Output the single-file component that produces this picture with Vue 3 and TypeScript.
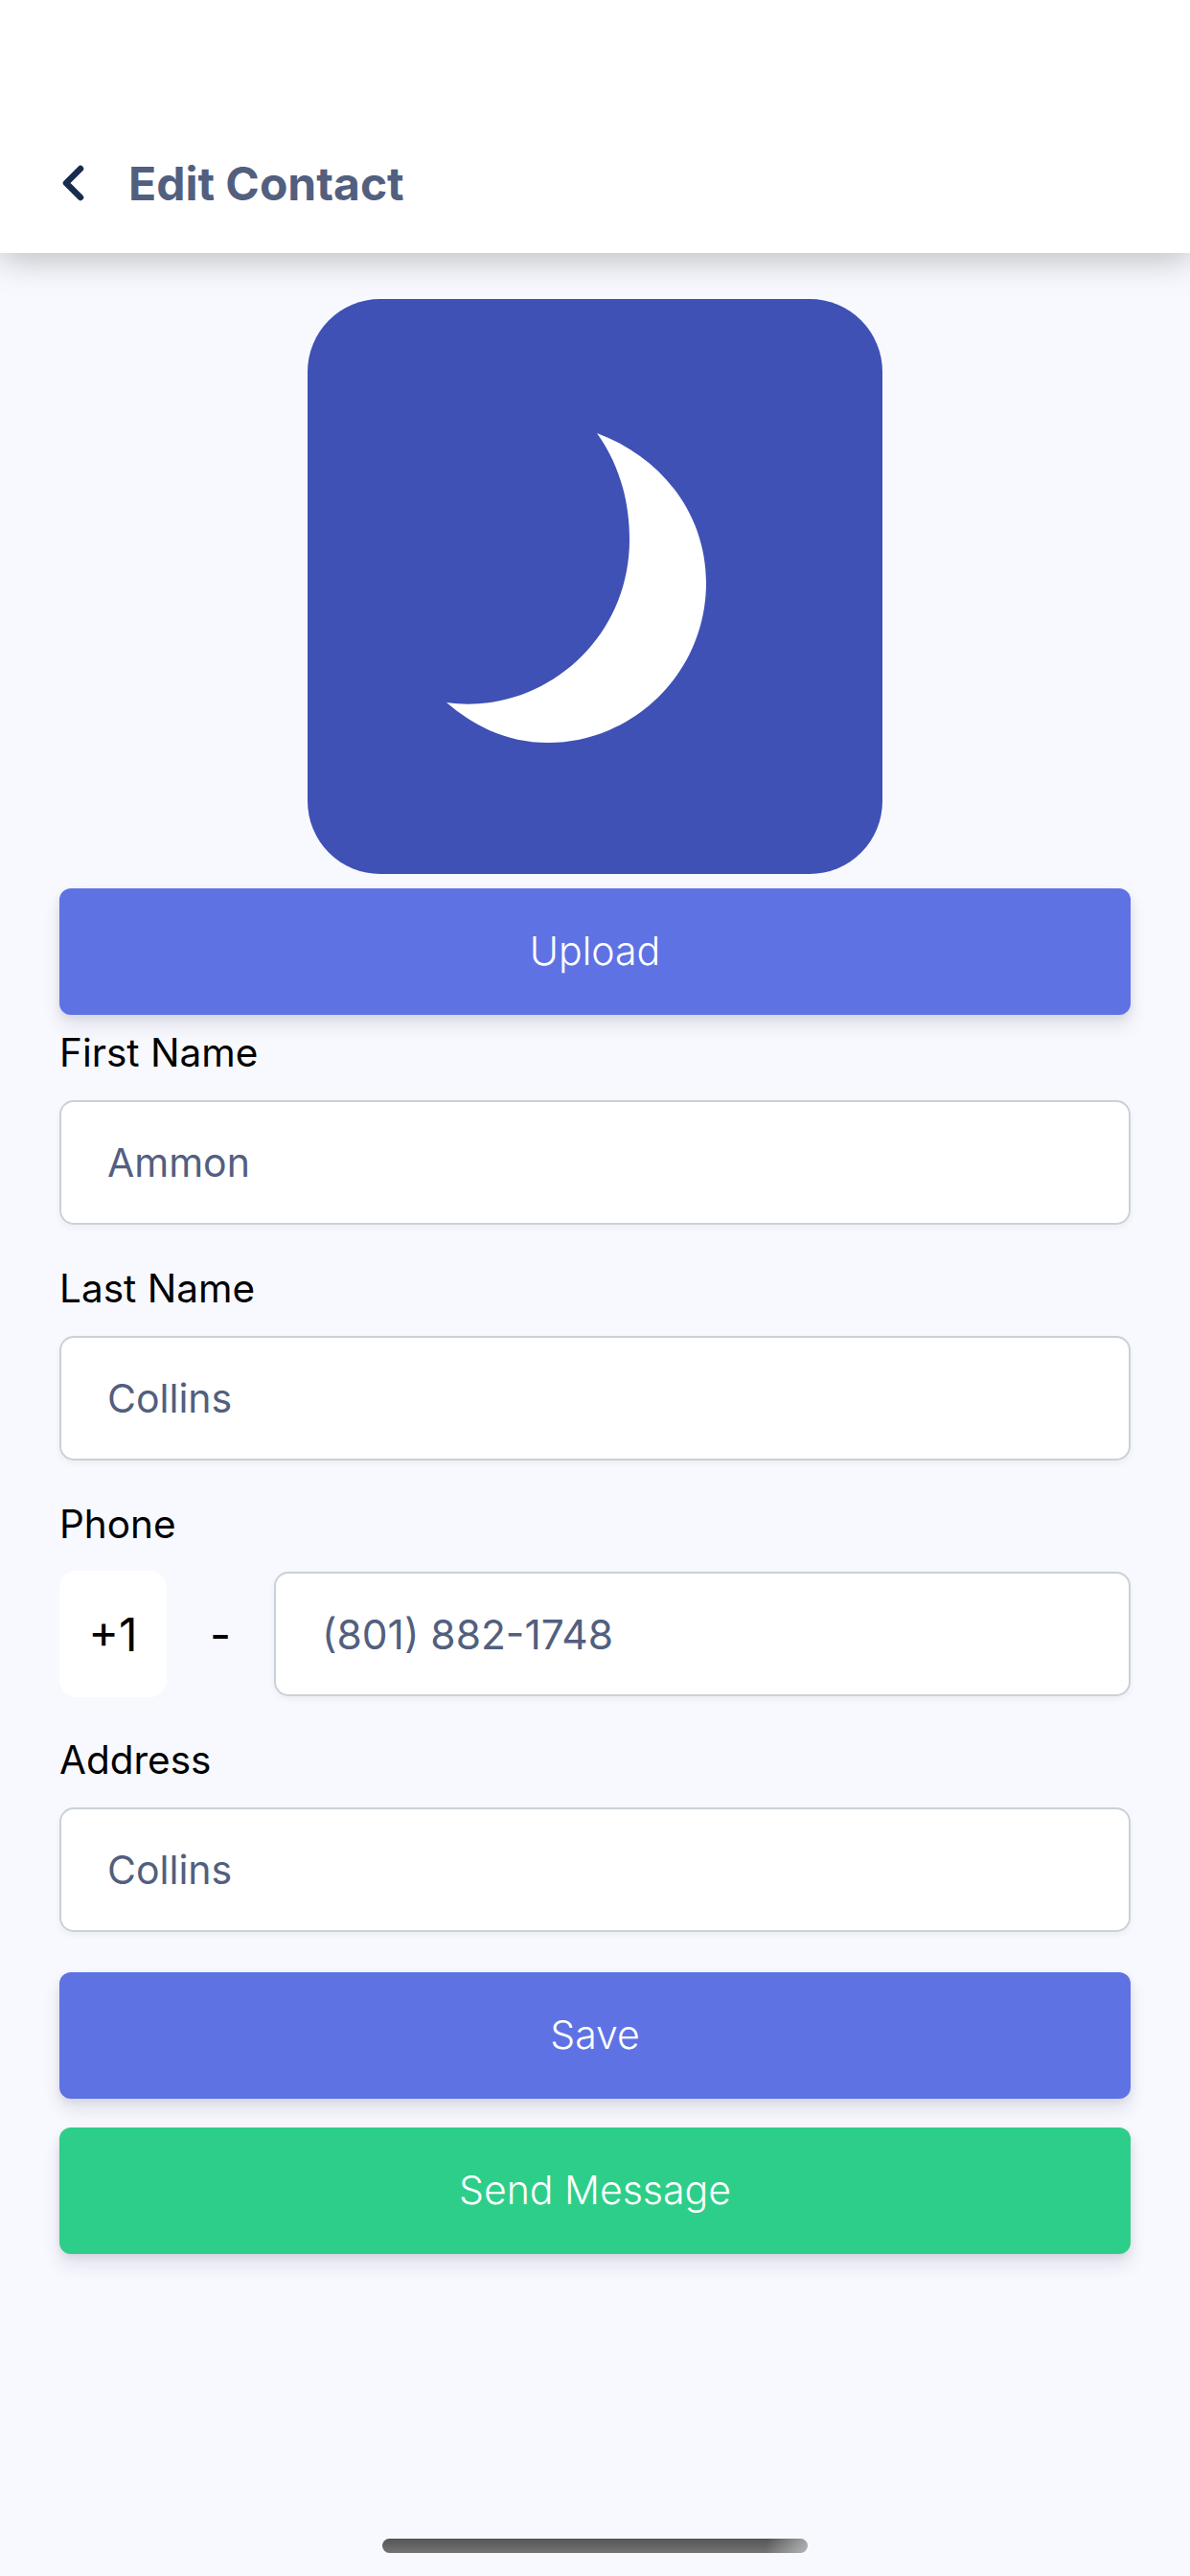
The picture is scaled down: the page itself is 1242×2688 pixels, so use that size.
<template>
  <div class="page">
    <header class="topbar">
      <button class="back" aria-label="Back">
        <svg width="24" height="38" viewBox="0 0 24 38">
          <path d="M20 4 L5 19 L20 34" fill="none" stroke="#172b4d" stroke-width="6.5" stroke-linecap="round" stroke-linejoin="round" />
        </svg>
      </button>
      <h1>Edit Contact</h1>
    </header>

    <main class="content">
      <div class="avatar">
        <svg width="600" height="600" viewBox="0 0 600 600">
          <path d="M302 140 C370 165 416 225 416 296 C416 390 340 463 251 463 C210 463 175 447 145 421 C240 435 336 360 336 251 C336 210 325 172 302 140 Z" fill="#fff" />
        </svg>
      </div>
      <button class="btn btn-primary">Upload</button>

      <div class="field" v-for="field in fields" :key="field.label">
        <label>{{ field.label }}</label>
        <div v-if="field.label === 'Phone'" class="phone">
          <span class="code">+1</span>
          <span class="dash">-</span>
          <input class="number" type="text" v-model="field.value" />
        </div>
        <input v-else type="text" v-model="field.value" />
      </div>

      <button class="btn btn-primary save">Save</button>
      <button class="btn btn-success">Send Message</button>
    </main>

    <div class="home-bar"></div>
  </div>
</template>

<script setup lang="ts">
import { ref } from 'vue'

const fields = ref([
  { label: 'First Name', value: 'Ammon' },
  { label: 'Last Name', value: 'Collins' },
  { label: 'Phone', value: '(801) 882-1748' },
  { label: 'Address', value: 'Collins' }
])
</script>

<style>
html, body {
  margin: 0;
  background: #f8f9fe;
}
</style>

<style scoped>
.page {
  position: relative;
  height: 2688px;
  overflow: hidden;
  background: #f8f9fe;
  font-family: Inter, "Liberation Sans", sans-serif;
  font-size: 40.5px;
  color: #000;
}

.topbar {
  display: flex;
  align-items: center;
  gap: 46px;
  height: 264px;
  box-sizing: border-box;
  padding: 118px 62px 0 64px;
  background: #fff;
  box-shadow: 0 4px 36px rgba(0, 0, 0, 0.28);
}

.back {
  display: flex;
  padding: 0;
  border: none;
  background: none;
}

h1 {
  margin: 0;
  font-size: 48px;
  font-weight: 700;
  color: #525f7f;
}

.content {
  display: flex;
  flex-direction: column;
  padding: 48px 62px 0;
}

.avatar {
  align-self: center;
  width: 600px;
  height: 600px;
  margin-bottom: 15px;
  border-radius: 76px;
  background: #3f51b5;
}

.avatar svg {
  display: block;
}

.btn {
  height: 132px;
  padding: 0 0 3px;
  border: none;
  border-radius: 12px;
  font-family: inherit;
  font-size: 41px;
  font-weight: 350;
  color: #fff;
  box-shadow: 0 12px 18px rgba(50, 50, 93, 0.11), 0 3px 9px rgba(0, 0, 0, 0.08);
}

.btn-primary {
  background: #5e72e4;
}

.btn-success {
  margin-top: 30px;
  background: #2dce89;
}

.save {
  margin-top: 15px;
}

.field {
  margin-bottom: 27px;
}

label {
  display: flex;
  align-items: center;
  height: 78px;
  margin-bottom: 11px;
}

input {
  display: block;
  width: 100%;
  height: 130px;
  box-sizing: border-box;
  padding: 0 48px;
  border: 2px solid #cad1d7;
  border-radius: 15px;
  background: #fff;
  font-family: inherit;
  font-size: 41px;
  color: #525f7f;
  outline: none;
  box-shadow: 0 3px 6px rgba(50, 50, 93, 0.06);
}

.number {
  font-size: 42.5px;
}

.phone {
  display: flex;
  align-items: center;
  height: 130px;
}

.code {
  display: flex;
  flex: none;
  align-items: center;
  justify-content: center;
  width: 112px;
  height: 132px;
  border-radius: 18px;
  background: #fff;
  font-size: 48px;
}

.dash {
  flex: none;
  width: 112px;
  text-align: center;
  font-size: 48px;
}

.home-bar {
  position: absolute;
  left: 399px;
  top: 2649px;
  width: 444px;
  height: 15px;
  border-radius: 8px;
  background:
    linear-gradient(100deg, transparent 90%, rgba(248, 249, 254, 0.5) 100%),
    linear-gradient(#555, #737373);
}
</style>
